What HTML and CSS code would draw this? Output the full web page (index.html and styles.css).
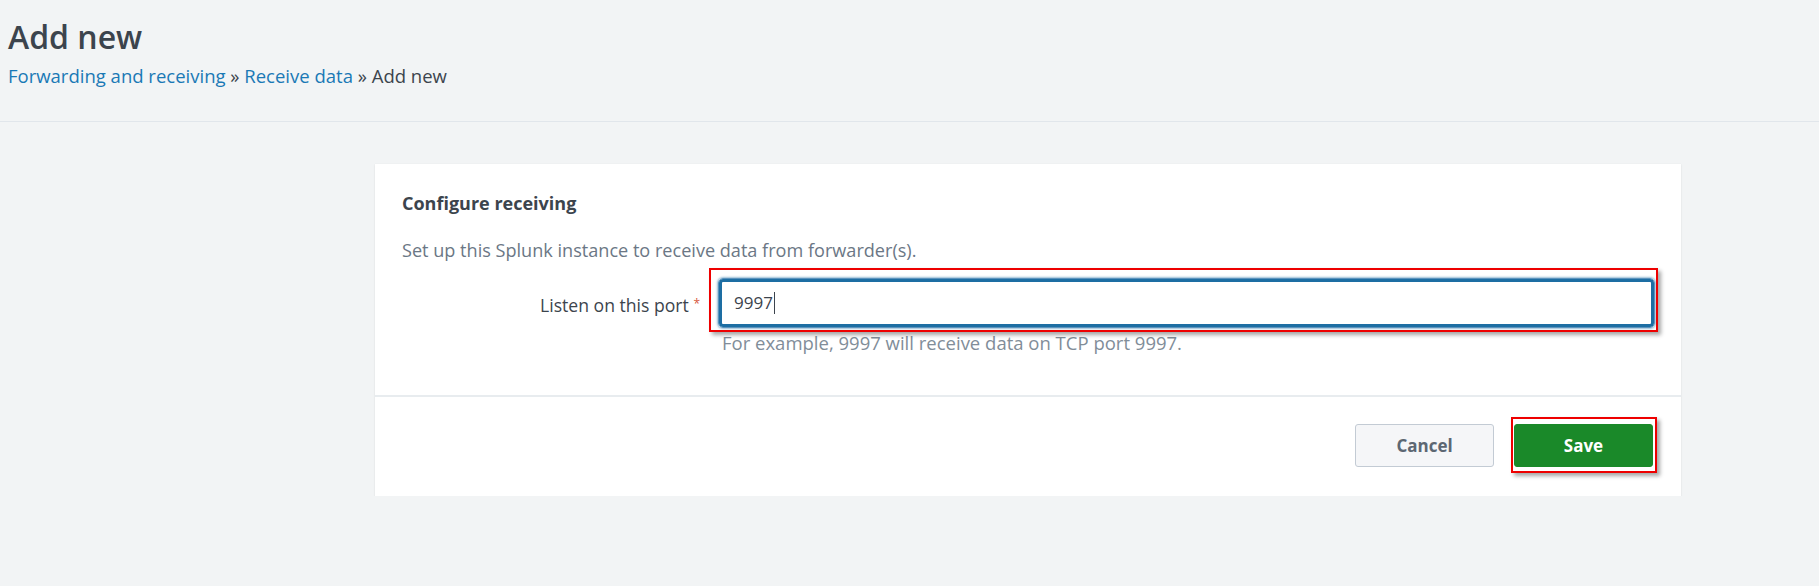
FILE: index.html
```html
<!DOCTYPE html>
<html>

<head>
    <meta name="viewport" content="width=device-width, initial-scale=1">
    <title>Add new</title>
    <link rel="stylesheet" href="styles.css">
</head>

<body>
    <header class="page-header">
        <h1>Add new</h1>
        <div class="breadcrumb">
            <a href="#">Forwarding and receiving</a> &raquo; <a href="#">Receive data</a> &raquo; Add new
        </div>
    </header>

    <main class="page-body">
        <form class="card">
            <div class="card-body">
                <h2>Configure receiving</h2>
                <p class="intro">Set up this Splunk instance to receive data from forwarder(s).</p>
                <div class="field">
                    <label for="port">Listen on this port <span class="req">*</span></label>
                    <div class="control">
                        <div class="marked marked-input">
                            <div class="text-input" id="port" role="textbox">9997<span class="caret"></span></div>
                        </div>
                        <p class="help">For example, 9997 will receive data on TCP port 9997.</p>
                    </div>
                </div>
            </div>
            <div class="card-footer">
                <button type="button" class="btn">Cancel</button>
                <span class="marked marked-btn">
                    <button type="button" class="btn btn-primary">Save</button>
                </span>
            </div>
        </form>
    </main>
</body>

</html>
```

FILE: styles.css
```css
body {
    margin: 0;
    font-family: 'Open Sans', 'Liberation Sans', sans-serif;
    background-color: #f2f4f5;
    color: #3c444d;
}

.page-header {
    box-sizing: border-box;
    height: 122px;
    padding: 17px 8px 0;
    border-bottom: 1px solid #e1e6eb;
}

.page-header h1 {
    margin: 0;
    font-size: 32px;
    line-height: 40px;
    font-weight: 600;
}

.breadcrumb {
    margin-top: 7px;
    font-size: 18.5px;
    line-height: 24px;
}

.breadcrumb a {
    color: #1a79b5;
    text-decoration: none;
}

.page-body {
    padding: 42px 138px 0 375px;
}

.card {
    background-color: white;
    box-shadow: 0 1px 2px rgba(0, 0, 0, 0.08), 0 0 1px rgba(0, 0, 0, 0.06);
}

.card-body {
    padding: 27px 26px 41px 27px;
    border-bottom: 2px solid #e8ecef;
}

.card-body h2 {
    margin: 0;
    font-size: 18px;
    line-height: 24px;
    font-weight: 700;
}

.intro {
    margin: 23px 0 0;
    font-size: 18.1px;
    line-height: 24px;
    color: #6b7785;
}

.field {
    display: flex;
    margin-top: 16px;
}

.field label {
    width: 316px;
    padding: 1px 18px 0 0;
    box-sizing: border-box;
    text-align: right;
    font-size: 17.6px;
    line-height: 50px;
}

.req {
    font-size: 12px;
    vertical-align: 4px;
    color: #d6563c;
}

.control {
    flex: 1;
}

.text-input {
    height: 50px;
    box-sizing: border-box;
    padding: 0 15px;
    border: 1px solid #5b93bd;
    border-radius: 5px;
    box-shadow: inset 0 0 0 3px #1d6ea3, 0 0 2px 1px rgba(29, 110, 163, 0.45);
    font-size: 17px;
    line-height: 48px;
    color: #3c444d;
}

.caret {
    display: inline-block;
    width: 1px;
    height: 22px;
    margin-left: 1px;
    vertical-align: -5px;
    background-color: #3c444d;
}

.help {
    margin: 4px 0 0 4px;
    font-size: 18.5px;
    line-height: 22px;
    color: #818d99;
}

.card-footer {
    display: flex;
    justify-content: flex-end;
    gap: 20px;
    padding: 27px 28px 29px;
}

.btn {
    width: 139px;
    height: 43px;
    border: 1px solid #c3cbd4;
    border-radius: 3px;
    background-color: #f5f6f8;
    font-family: inherit;
    font-size: 17px;
    font-weight: 700;
    color: #5c6773;
    cursor: pointer;
}

.btn-primary {
    display: block;
    border-color: #1a8929;
    background-color: #1a8929;
    color: white;
}

.marked {
    position: relative;
    display: block;
}

.marked::after {
    content: '';
    position: absolute;
    border: 2px solid #ee0000;
    box-shadow: 3px 3px 4px rgba(0, 0, 0, 0.35);
    pointer-events: none;
}

.marked-input::after {
    inset: -10px -3px -4px -9px;
}

.marked-btn::after {
    inset: -7px -4px -6px -3px;
}
```
